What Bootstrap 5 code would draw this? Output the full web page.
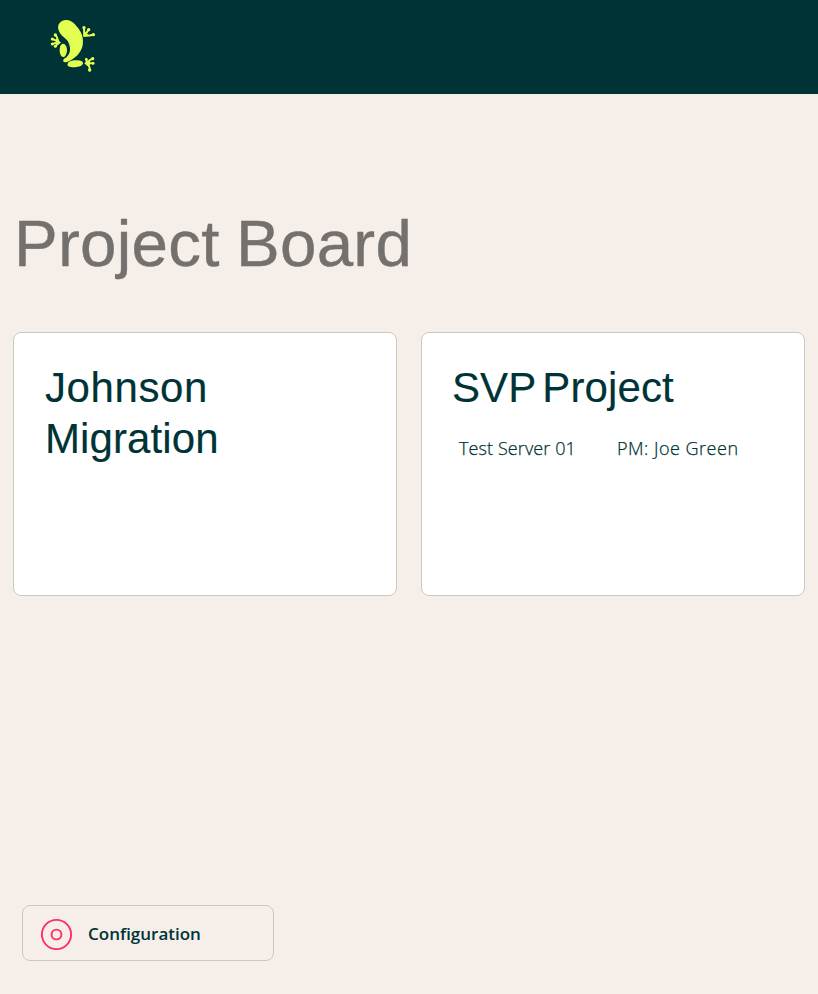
<!DOCTYPE html>
<html lang="en">
<head>
<meta charset="utf-8">
<meta name="viewport" content="width=device-width, initial-scale=1">
<title>Project Board</title>
<link href="https://cdn.jsdelivr.net/npm/bootstrap@5.3.0/dist/css/bootstrap.min.css" rel="stylesheet">
<style>
body{background:#f5eee9;color:#003336;font-family:"Open Sans","Noto Sans",sans-serif}
.topbar{background:#003336;height:94px;padding:19px 50px}
.board{padding:116px 13px 0}
.board-title{font:400 65.5px/67px "Liberation Sans",sans-serif;color:#74706d;letter-spacing:.25px;word-spacing:-2px;margin:0 0 32px 1px;padding-bottom:23px;-webkit-text-stroke:.4px #74706d}
.board-grid{--bs-gutter-x:24px}
.project{height:264px;border:1px solid #cdc8c4;border-radius:8px;color:#003336}
.project .card-body{padding:29px 31px}
.project-name{font:400 42px/51px "Liberation Sans",sans-serif;margin:0;-webkit-text-stroke:.15px #003336}
.name-first{letter-spacing:.6px}
.name-second{letter-spacing:.1px}
.name-tight{margin-left:-1px;letter-spacing:.1px;word-spacing:-5px}
.meta{font-size:18px;font-weight:300;line-height:26px;margin-top:22px;padding-left:6px;-webkit-text-stroke:.25px #003336}
.meta-server{width:158px;letter-spacing:.1px}
.meta-pm{letter-spacing:.5px}
.config{width:252px;height:56px;border:1px solid #cdc8c4;border-radius:8px;margin:0 0 33px 22px;padding:1px 18px 0;gap:15px;color:#003336;font-size:17px;font-weight:600}
</style>
</head>
<body class="d-flex flex-column min-vh-100">
<header class="topbar">
<svg class="d-block" width="46" height="54" viewBox="30 27 138 162" fill="#e3ff52" stroke="#e3ff52" stroke-linecap="round" stroke-linejoin="round" aria-label="Frog logo">
<path stroke="none" d="M56 61C49 43 64 29 80 30c15 1 23 10 31 20 14 16 21 34 17 56-5 24-24 41-45 49-8 3-15 2-13-5 1-4 7-6 10-9 12-13 12-25 7-40-5-17-25-20-31-40Z"/>
<path stroke="none" d="M68 101c7-1 13 8 13 18 0 11-5 22-11 22-7 0-11-10-11-21 0-10 3-18 9-19ZM83 161c4-9 17-10 29-10 10 0 16 3 17 8 0 7-9 11-19 12-15 2-31-1-27-10Z"/>
<path stroke="none" d="M63 98 54 104 48 98 47 90 51 84 57 92ZM130 80 131 68 138 67 147 77ZM133 160 146 150 150 158 149 168 141 167Z"/>
<g fill="none" stroke-width="6"><path d="M54 92Q52 82 47 75M54 94 37 87M53 97 37 102M56 98 46 109"/><path d="M133 77 132 53M136 73 146 59M135 77Q148 77 161 74"/><path d="M140 157 Q140 152 139 148M145 156Q150 147 159 146M146 160 159 160M144 163Q150 171 149 181"/></g>
<g stroke="none"><circle cx="46" cy="75" r="5"/><circle cx="37" cy="87" r="4.5"/><circle cx="37" cy="102" r="4.5"/><circle cx="46" cy="109" r="4.5"/><circle cx="132" cy="53" r="5"/><circle cx="146" cy="59" r="5"/><circle cx="160" cy="74" r="5"/><circle cx="139" cy="148" r="4"/><circle cx="158" cy="146" r="5"/><circle cx="159" cy="160" r="4.5"/><circle cx="149" cy="180" r="5"/></g>
</svg>
</header>
<main class="board">
<h1 class="board-title">Project Board</h1>
<div class="row row-cols-2 board-grid">
<div class="col"><article class="card project"><div class="card-body"><h2 class="project-name"><span class="name-first">Johnson</span><br><span class="name-second">Migration</span></h2></div></article></div>
<div class="col"><article class="card project"><div class="card-body"><h2 class="project-name name-tight">SVP Project</h2><div class="meta d-flex text-nowrap"><span class="meta-server">Test Server 01</span><span class="meta-pm">PM: Joe Green</span></div></div></article></div>
</div>
</main>
<a href="#" class="config d-flex align-items-center text-decoration-none mt-auto">
<svg width="32" height="32" viewBox="0 0 32 32" fill="none" stroke="#ff2e63" stroke-width="1.9" aria-hidden="true"><circle cx="15.5" cy="16.5" r="14.6"/><circle cx="15.5" cy="16.5" r="4.9"/></svg>
<span>Configuration</span>
</a>
<script src="https://cdn.jsdelivr.net/npm/bootstrap@5.3.0/dist/js/bootstrap.bundle.min.js"></script>
</body>
</html>
